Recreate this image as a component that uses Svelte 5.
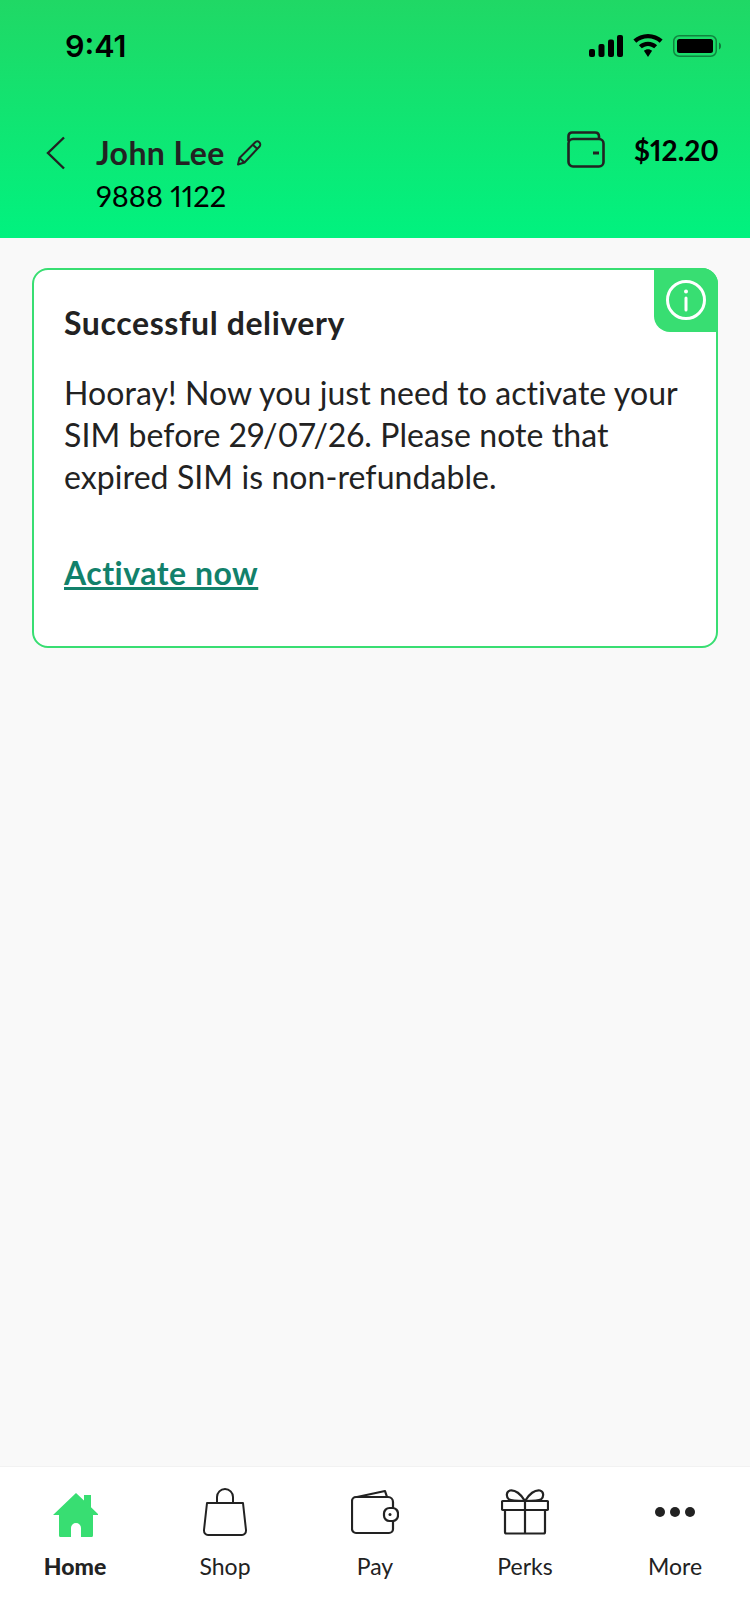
<script>
  const lines = ['Hooray! Now you just need to activate your', 'SIM before 29/07/26. Please note that', 'expired SIM is non-refundable.'];
</script>

<div class="page">
  <header class="top">
    <div class="status">
      <span class="time">9:41</span>
      <div class="sys">
        <svg width="34" height="22" viewBox="0 0 34 22"><rect x="0" y="14" width="6" height="8" rx="2"/><rect x="9.500" y="9" width="6" height="13" rx="2"/><rect x="19" y="4.500" width="6" height="17.500" rx="2"/><rect x="28" y="0" width="6" height="22" rx="2"/></svg>
        <svg width="30" height="23" viewBox="0 0 30 23"><path d="M15 0C9.400 0 4.300 2.100.400 5.600l2.900 3.100C6.400 5.900 10.500 4.200 15 4.200s8.600 1.700 11.700 4.500l2.900-3.100C25.700 2.100 20.600 0 15 0z"/><path d="M15 7.700c-3.500 0-6.700 1.300-9.100 3.500l2.900 3.100c1.700-1.500 3.900-2.400 6.200-2.400s4.500.9 6.200 2.400l2.900-3.100c-2.400-2.200-5.600-3.500-9.100-3.500z"/><path d="M15 15.200c-1.600 0-3 .6-4.100 1.600L15 23l4.100-6.200c-1.100-1-2.500-1.600-4.100-1.600z"/></svg>
        <svg width="48" height="22" viewBox="0 0 48 22"><rect x=".75" y=".75" width="42.500" height="20.500" rx="5.500" fill="none" stroke="#000" stroke-opacity=".4" stroke-width="1.500"/><rect x="4" y="4" width="36" height="14" rx="2.500"/><path d="M46 7.500c1.200.4 2 1.900 2 3.500s-.8 3.100-2 3.500z" fill-opacity=".45"/></svg>
      </div>
    </div>
    <div class="account">
      <svg class="back" width="20" height="34" viewBox="0 0 20 34"><path d="M18 1.500 2 17l16 15.500" fill="none" stroke="#222" stroke-width="2.400"/></svg>
      <div class="who">
        <div class="name-row">
          <span class="name">John Lee</span>
          <svg width="26" height="26" viewBox="0 0 26 26" fill="none" stroke="#222" stroke-width="2" stroke-linejoin="round"><path d="M19 2.500a2.800 2.800 0 0 1 4.500 4L8.500 22.500 2 24.500l1.500-6.500z"/><path d="M17 5l4.500 4M3.500 18l5 4.500"/></svg>
        </div>
        <div class="phone">9888 1122</div>
      </div>
      <div class="balance">
        <svg width="38" height="37" viewBox="0 0 38 37" fill="none" stroke="#222" stroke-width="2.600" stroke-linejoin="round"><path d="M1.500 10V5a3.500 3.500 0 0 1 3.500-3.500h23c2.500 0 4 1.500 4 4V8"/><rect x="1.500" y="8" width="35" height="27.500" rx="4.500"/><path d="M26 22h6" stroke-width="3"/></svg>
        <span class="amount">$12.20</span>
      </div>
    </div>
  </header>

  <main class="content">
    <section class="card">
      <div class="badge">
        <svg width="40" height="40" viewBox="0 0 40 40" fill="none" stroke="#fff" stroke-width="3"><circle cx="20" cy="20" r="18.500"/><path d="M20 18v12" stroke-linecap="round"/><circle cx="20" cy="11.500" r="2" fill="#fff" stroke="none"/></svg>
      </div>
      <h2>Successful delivery</h2>
      <p>{#each lines as l}<span class="ln">{l}</span>{/each}</p>
      <a href="#activate">Activate now</a>
    </section>
  </main>

  <nav class="tabs">
    <div class="tab active">
      <svg width="46" height="50" viewBox="-1 -6 46 50"><path d="M23 0 31 7.600V2h7v12.300L46 22h-6v20.500a1.500 1.500 0 0 1-1.500 1.500H28V35a5 5 0 0 0-10 0v9H7.500A1.500 1.500 0 0 1 6 42.500V22H0z" fill="#38de72"/></svg>
      <span>Home</span>
    </div>
    <div class="tab">
      <svg width="46" height="50" viewBox="0 0 46 50" fill="none" stroke="#222" stroke-width="2"><path d="M15 16V10a8 8 0 0 1 16 0v6"/><path d="M5 16h36l3 27c.2 3-1.800 5-4 5H6c-2.200 0-4.200-2-4-5z" stroke-linejoin="round"/></svg>
      <span>Shop</span>
    </div>
    <div class="tab">
      <svg width="48" height="44" viewBox="0 0 48 44" fill="none" stroke="#222" stroke-width="2.200" stroke-linejoin="round"><path d="M1 39V11a4 4 0 0 1 4-4h32a5 5 0 0 1 5 5v6M42 31v8a4 4 0 0 1-4 4H5a4 4 0 0 1-4-4"/><path d="M6 7 34 1l2 6"/><rect x="33" y="18" width="14" height="13" rx="5.500"/><circle cx="39" cy="24.500" r="1.500" fill="#222" stroke="none"/></svg>
      <span>Pay</span>
    </div>
    <div class="tab">
      <svg width="48" height="46" viewBox="0 0 48 46" fill="none" stroke="#222" stroke-width="2.200" stroke-linejoin="round"><rect x="1" y="12" width="46" height="9" rx="1"/><path d="M4 21v22a1.500 1.500 0 0 0 1.500 1.500h37A1.500 1.500 0 0 0 44 43V21M24 12v32.500"/><path d="M24 12C20 5 14 .5 9 1.500 5 2.500 5 8 8 10.500c2 1.500 8 1.500 16 1.500zM24 12c4-7 10-11.500 15-10.500 4 1 4 6.500 1 9-2 1.500-8 1.500-16 1.500z"/></svg>
      <span>Perks</span>
    </div>
    <div class="tab">
      <svg width="46" height="46" viewBox="0 0 46 46" fill="#222"><circle cx="8" cy="23" r="5"/><circle cx="23" cy="23" r="5"/><circle cx="38" cy="23" r="5"/></svg>
      <span>More</span>
    </div>
  </nav>
</div>

<style>
  :global(body) { margin: 0; background: #f9f9f9; }
  .page {
    width: 750px;
    height: 1624px;
    display: flex;
    flex-direction: column;
    background: #f9f9f9;
    font-family: Lato, "Open Sans", sans-serif;
    font-variant-numeric: proportional-nums;
    font-variant-ligatures: none;
    color: #222;
    overflow: hidden;
  }
  .top {
    height: 238px;
    box-sizing: border-box;
    background: linear-gradient(180deg, #20d865 0%, #01f27f 100%);
    flex: none;
  }
  .status {
    height: 92px;
    box-sizing: border-box;
    display: flex;
    justify-content: space-between;
    align-items: flex-start;
    padding: 28px 29px 0 65px;
  }
  .time {
    font: 600 30.500px/36px Inter, sans-serif;
    color: #000;
  }
  .sys { display: flex; gap: 10px; align-items: center; padding-top: 6px; }
  .account {
    display: flex;
    align-items: flex-start;
    padding: 0 31px 0 46px;
  }
  .back { margin-top: 44px; flex: none; }
  .who { margin-left: 30px; margin-top: 42px; }
  .name-row { display: flex; align-items: center; gap: 11px; }
  .name { font-size: 32px; font-weight: 700; line-height: 38px; color: #222; letter-spacing: 0.400px; }
  .phone { font-size: 29px; line-height: 34px; color: #000; margin-top: 7px; }
  .balance { margin-left: auto; margin-top: 39px; display: flex; align-items: center; gap: 29px; }
  .amount { font-size: 28px; font-weight: 700; color: #000; line-height: 34px; }
  .content { flex: 1; padding: 30px 32px; }
  .card {
    position: relative;
    box-sizing: border-box;
    height: 380px;
    border: 2px solid #38de72;
    border-radius: 16px;
    background: #fff;
    padding: 34px 30px 0;
  }
  .badge {
    position: absolute;
    top: -2px;
    right: -2px;
    width: 64px;
    height: 64px;
    background: #38de72;
    border-radius: 0 16px 0 16px;
    display: flex;
    align-items: center;
    justify-content: center;
  }
  h2 { margin: 0; font-size: 32px; line-height: 38px; font-weight: 700; color: #222; letter-spacing: 0.600px; }
  p { margin: 30px 0 0; font-size: 32px; line-height: 42px; color: #222; letter-spacing: 0.080px; }
  .ln { display: block; }
  a {
    display: inline-block;
    margin-top: 55px;
    font-size: 32px;
    line-height: 40px;
    font-weight: 700;
    color: #12816b;
    text-decoration: underline;
    letter-spacing: 0.500px;
  }
  .tabs {
    flex: none;
    height: 158px;
    background: #fff;
    border-top: 1px solid #f2f2f2;
    display: grid;
    grid-template-columns: repeat(5, 150px);
    box-sizing: border-box;
  }
  .tab { position: relative; display: flex; flex-direction: column; align-items: center; padding-top: 20px; }
  .tab svg { height: 50px; display: block; }
  .tab span { margin-top: 14px; font-size: 23px; line-height: 30px; color: #222; }
  .tab.active span { font-weight: 900; }
</style>
